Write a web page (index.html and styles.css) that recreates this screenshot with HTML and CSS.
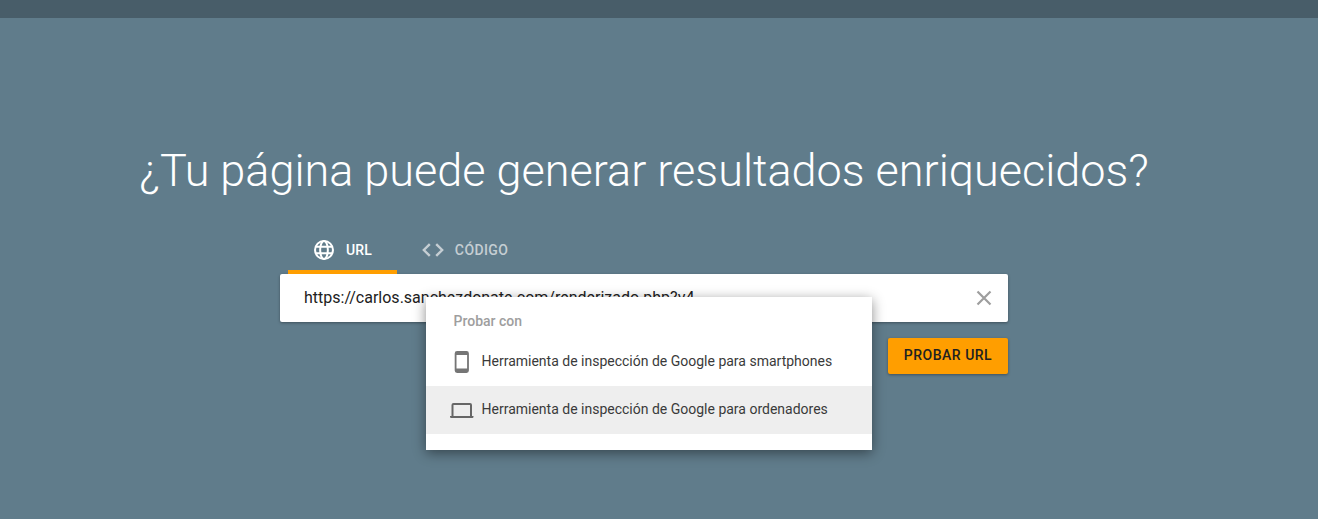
FILE: index.html
```html
<!DOCTYPE html>
<html lang="es">
<head>
  <meta charset="UTF-8">
  <title>Prueba de resultados enriquecidos</title>
  <link rel="stylesheet" href="styles.css">
</head>
<body>
  <div class="topbar"></div>
  <main class="main">
    <h1 class="title">¿Tu página puede generar resultados enriquecidos?</h1>
    <div class="panel">
      <div class="tabs">
        <div class="tab tab-active">
          <svg class="tab-icon" viewBox="0 0 24 24" fill="none" stroke="#fff" stroke-width="2.200">
            <circle cx="12" cy="12" r="9.800"/>
            <ellipse cx="12" cy="12" rx="4.200" ry="9.800"/>
            <path d="M3 8.500h18M3 15.500h18"/>
          </svg>
          <span>URL</span>
        </div>
        <div class="tab tab-code">
          <svg class="tab-icon" viewBox="0 0 24 24" fill="none" stroke="#c5ced3" stroke-width="2.600">
            <path d="M8.500 5.500 2 12l6.500 6.500M15.500 5.500 22 12l-6.500 6.500"/>
          </svg>
          <span>CÓDIGO</span>
        </div>
      </div>
      <div class="search-box">
        <span class="search-text">https://carlos.sanchezdonate.com/renderizado.php?v4</span>
        <svg class="clear-icon" viewBox="0 0 16 16" fill="none" stroke="#9e9e9e" stroke-width="2.200">
          <path d="M1.500 1.500l13 13M14.500 1.500l-13 13"/>
        </svg>
      </div>
      <div class="actions">
        <button class="test-btn" type="button">PROBAR URL</button>
      </div>
      <div class="menu">
        <div class="menu-title">Probar con</div>
        <div class="menu-item">
          <svg class="menu-icon" viewBox="0 0 24 24" fill="#757575">
            <path d="M16.500 1h-9.400a2.400 2.400 0 0 0-2.400 2.400v17.200a2.400 2.400 0 0 0 2.400 2.400h9.400a2.400 2.400 0 0 0 2.400-2.400V3.400A2.400 2.400 0 0 0 16.500 1zm.6 17.500H6.500V5h10.600z"/>
          </svg>
          <span class="menu-label">Herramienta de inspección de Google para smartphones</span>
        </div>
        <div class="menu-item menu-item-hover">
          <svg class="menu-icon" viewBox="0 0 24 24" fill="#666666">
            <path d="M3.500 5h16.500a2 2 0 0 1 2 2v11h-2V7H3.500v11h-2V7a2 2 0 0 1 2-2zM0 18h23.500v.8a1.200 1.200 0 0 1-1.200 1.200H1.200A1.200 1.200 0 0 1 0 18.800z"/>
          </svg>
          <span class="menu-label">Herramienta de inspección de Google para ordenadores</span>
        </div>
      </div>
    </div>
  </main>
</body>
</html>
```

FILE: styles.css
```css
* {
  box-sizing: border-box;
  margin: 0;
  padding: 0;
}
html, body {
  height: 100%;
  overflow: hidden;
}
body {
  font-family: Roboto, Arial, sans-serif;
  background-color: #607c8b;
  color: #212121;
}
.topbar {
  height: 18px;
  background-color: #485d69;
}
.main {
  width: 1288px;
  display: flex;
  flex-direction: column;
  align-items: center;
}
.title {
  margin-top: 127px;
  font-size: 45px;
  line-height: 52px;
  font-weight: 300;
  color: #fff;
  white-space: nowrap;
}
.panel {
  position: relative;
  width: 728px;
  margin-top: 37px;
}
.tabs {
  display: flex;
  padding-left: 8px;
  height: 40px;
}
.tab {
  display: flex;
  align-items: center;
  gap: 11px;
  height: 40px;
  padding: 0 25px 9px 25px;
  font-size: 14px;
  font-weight: 500;
  letter-spacing: 0.1px;
  color: #c5ced3;
}
.tab-code {
  letter-spacing: 0.4px;
}
.tab-active {
  color: #fff;
  border-bottom: 4px solid #ff9e00;
  padding-bottom: 5px;
}
.tab-icon {
  width: 22px;
  height: 22px;
}
.search-box {
  display: flex;
  align-items: center;
  justify-content: space-between;
  height: 48px;
  padding: 0 16px 0 24px;
  background-color: #fff;
  border-radius: 2px;
  box-shadow: 0 1px 3px rgba(0, 0, 0, 0.35);
  font-size: 16px;
}
.search-text {
  padding-bottom: 2px;
}
.clear-icon {
  width: 16px;
  height: 16px;
}
.actions {
  display: flex;
  justify-content: flex-end;
  margin-top: 16px;
}
.test-btn {
  width: 120px;
  height: 36px;
  border: none;
  border-radius: 2px;
  padding-bottom: 2px;
  background-color: #ff9e00;
  color: #212121;
  font-family: inherit;
  font-size: 14px;
  font-weight: 500;
  letter-spacing: 0.5px;
  box-shadow: 0 1px 3px rgba(0, 0, 0, 0.35);
}
.menu {
  position: absolute;
  left: 146px;
  top: 63px;
  width: 446px;
  height: 153px;
  background-color: #fff;
  box-shadow: 0 3px 12px rgba(0, 0, 0, 0.45);
  font-size: 14px;
  color: #3a3a3a;
}
.menu-title {
  height: 41px;
  padding: 16px 0 0 27.500px;
  font-size: 14px;
  line-height: 16px;
  font-weight: 500;
  color: #9e9e9e;
}
.menu-item {
  display: flex;
  align-items: center;
  height: 48px;
  padding-left: 24px;
  gap: 7.500px;
}
.menu-item-hover {
  background-color: #eeeeee;
}
.menu-icon {
  width: 24px;
  height: 24px;
  flex-shrink: 0;
}
.menu-label {
  padding-bottom: 2px;
}
```
